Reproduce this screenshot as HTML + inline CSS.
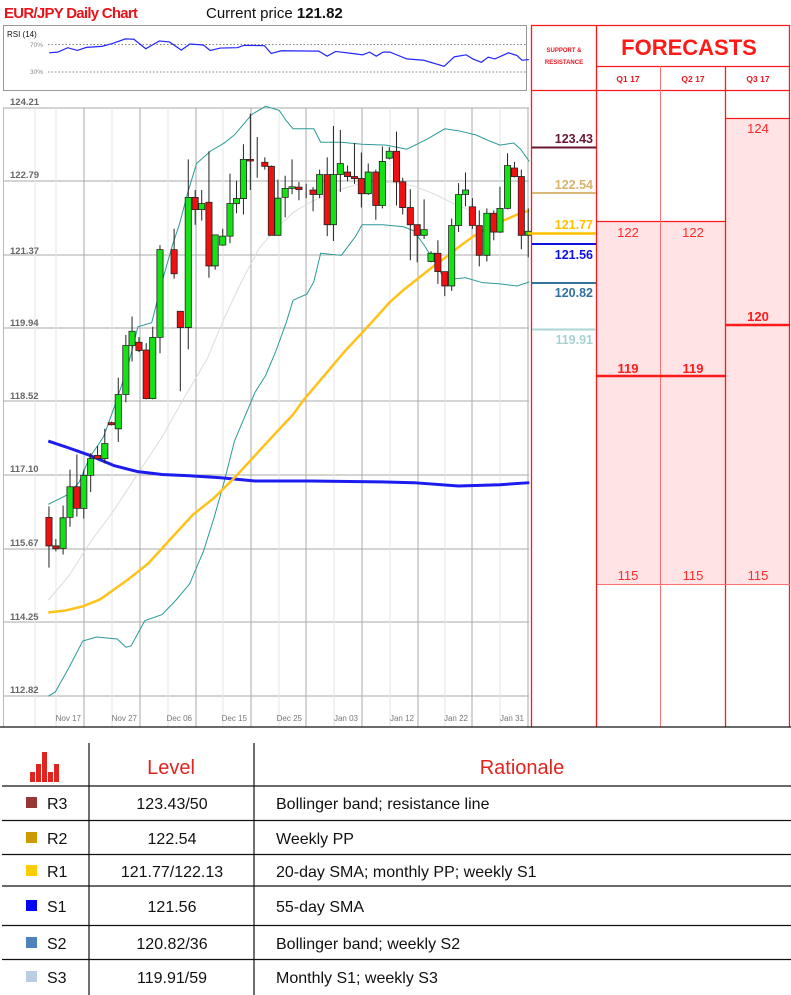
<!DOCTYPE html>
<html><head><meta charset="utf-8"><style>
html,body{margin:0;padding:0;background:#fff;width:791px;height:995px;overflow:hidden}
svg{display:block}
text{font-family:"Liberation Sans",sans-serif}
</style></head><body>
<svg width="791" height="995" viewBox="0 0 791 995" xmlns="http://www.w3.org/2000/svg">
<!-- Title -->
<text x="4" y="18" font-size="15" font-weight="bold" fill="#e8141c" textLength="134">EUR/JPY Daily Chart</text>
<text x="206" y="18" font-size="15" fill="#111">Current price <tspan font-weight="bold">121.82</tspan></text>

<!-- RSI box -->
<rect x="3.5" y="25.5" width="523" height="65" fill="#fff" stroke="#999"/>
<text x="7" y="37" font-size="8" fill="#111">RSI (14)</text>
<text x="30" y="47" font-size="6.5" fill="#888">70%</text>
<text x="30" y="74" font-size="6.5" fill="#888">30%</text>
<line x1="48" y1="44.5" x2="526" y2="44.5" stroke="#555" stroke-dasharray="1.5,2" stroke-width="0.8"/>
<line x1="48" y1="72" x2="526" y2="72" stroke="#555" stroke-dasharray="1.5,2" stroke-width="0.8"/>
<g transform="translate(0,25) scale(0.339,0.339)">
<polyline fill="none" stroke="#2424ff" stroke-width="1.2" vector-effect="non-scaling-stroke" points="145,82 170,80 200,67 228,75 255,66 300,63 330,55 370,41 395,42 430,70 470,47 500,50 535,74 560,56 600,59 620,75 650,68 700,67 720,60 780,61 800,84 830,76 940,77 965,92 990,78 1040,84 1070,88 1090,80 1110,92 1130,80 1150,80 1200,100 1250,104 1310,122 1340,94 1375,88 1395,100 1420,110 1440,95 1460,100 1500,82 1525,90 1540,104 1560,102"/>
</g>

<!-- Main chart -->
<rect x="3" y="108" width="526" height="619" fill="#fff"/>
<line x1="3.5" y1="108" x2="3.5" y2="727" stroke="#bbb"/>
<g stroke="#aaa" stroke-width="1">
<line x1="3" y1="108" x2="529" y2="108"/><line x1="3" y1="181" x2="529" y2="181"/><line x1="3" y1="255" x2="529" y2="255"/>
<line x1="3" y1="328" x2="529" y2="328"/><line x1="3" y1="401" x2="529" y2="401"/><line x1="3" y1="475" x2="529" y2="475"/>
<line x1="3" y1="549" x2="529" y2="549"/><line x1="3" y1="622" x2="529" y2="622"/><line x1="3" y1="696" x2="529" y2="696"/>
</g>
<g stroke="#aaa" stroke-width="1">
<line x1="84" y1="108" x2="84" y2="727"/><line x1="140" y1="108" x2="140" y2="727"/><line x1="196" y1="108" x2="196" y2="727"/>
<line x1="251" y1="108" x2="251" y2="727"/><line x1="306" y1="108" x2="306" y2="727"/><line x1="362" y1="108" x2="362" y2="727"/>
<line x1="418" y1="108" x2="418" y2="727"/><line x1="472" y1="108" x2="472" y2="727"/><line x1="528" y1="108" x2="528" y2="727"/>
</g>
<g stroke="#e6e6e6" stroke-width="1">
<line x1="35" y1="108" x2="35" y2="727"/><line x1="56" y1="108" x2="56" y2="727"/><line x1="112" y1="108" x2="112" y2="727"/><line x1="168" y1="108" x2="168" y2="727"/><line x1="223" y1="108" x2="223" y2="727"/><line x1="279" y1="108" x2="279" y2="727"/><line x1="334" y1="108" x2="334" y2="727"/><line x1="390" y1="108" x2="390" y2="727"/><line x1="445" y1="108" x2="445" y2="727"/><line x1="500" y1="108" x2="500" y2="727"/>
</g>
<g font-size="9.5" fill="#666" font-weight="bold">
<text x="10" y="105">124.21</text><text x="10" y="178">122.79</text><text x="10" y="254">121.37</text>
<text x="10" y="326">119.94</text><text x="10" y="399">118.52</text><text x="10" y="472">117.10</text>
<text x="10" y="546">115.67</text><text x="10" y="620">114.25</text><text x="10" y="693">112.82</text>
</g>
<g font-size="8" fill="#777" text-anchor="end">
<text x="81" y="721">Nov 17</text><text x="137" y="721">Nov 27</text><text x="192" y="721">Dec 06</text>
<text x="247" y="721">Dec 15</text><text x="302" y="721">Dec 25</text><text x="358" y="721">Jan 03</text>
<text x="414" y="721">Jan 12</text><text x="468" y="721">Jan 22</text><text x="524" y="721">Jan 31</text>
</g>

<g transform="translate(0,90) scale(0.3448,0.4082)">
<!-- middle band -->
<polyline fill="none" stroke="#dcdcdc" stroke-width="1" vector-effect="non-scaling-stroke" points="140,1250 200,1190 260,1110 330,1030 400,940 470,850 530,760 600,660 650,560 700,470 750,390 800,340 850,300 900,275 950,255 1000,240 1050,228 1100,225 1150,228 1200,235 1260,255 1320,280 1380,300"/>
<!-- bollinger -->
<polyline fill="none" stroke="#2a9a98" stroke-width="1" vector-effect="non-scaling-stroke" points="140,1015 200,990 230,960 260,900 300,850 330,780 370,680 400,580 440,570 470,470 500,380 520,330 545,250 570,180 610,150 650,130 680,110 710,80 730,60 770,40 810,50 830,75 850,95 910,95 930,128 990,128 1050,133 1120,135 1180,145 1240,120 1290,95 1330,100 1380,110 1420,125 1450,135 1490,130 1510,145 1535,175"/>
<polyline fill="none" stroke="#2a9a98" stroke-width="1" vector-effect="non-scaling-stroke" points="140,1485 160,1475 200,1415 240,1350 280,1340 340,1345 365,1365 380,1362 420,1300 470,1285 510,1250 550,1210 590,1130 620,1050 650,960 680,860 710,800 740,740 770,700 800,640 830,570 850,515 890,500 910,470 930,400 990,405 1030,360 1050,330 1110,330 1170,335 1200,345 1230,380 1260,420 1290,465 1350,460 1400,472 1450,475 1500,480 1535,470"/>
<!-- 55 SMA blue -->
<polyline fill="none" stroke="#1c1cf0" stroke-width="3" vector-effect="non-scaling-stroke" stroke-linejoin="round" points="140,860 200,877 260,895 330,920 400,935 470,942 550,945 640,950 740,958 900,958 1100,960 1200,962 1330,970 1450,967 1535,962"/>
<!-- yellow 20SMA -->
<polyline fill="none" stroke="#ffc21a" stroke-width="2.5" vector-effect="non-scaling-stroke" stroke-linejoin="round" points="140,1280 190,1275 240,1265 290,1248 320,1230 370,1200 430,1160 500,1095 560,1040 620,1000 680,950 740,895 800,840 850,795 880,760 920,720 960,680 1000,640 1050,595 1090,558 1130,520 1170,490 1200,470 1260,430 1300,405 1330,385 1370,360 1400,345 1460,320 1500,305 1535,295"/>
<!-- wicks -->
<path stroke="#222" stroke-width="1" vector-effect="non-scaling-stroke" fill="none" d="M142 1020V1170M162 1100V1130M183 1018V1138M203 930V1070M223 893V1045M243 930V1050M263 890V985M283 872V905M304 830V915M323 812V822M343 705V862M365 600V765M383 555V665M403 605V642M424 620V758M443 580V758M464 380V645M505 340V462M523 542V738M546 170V635M566 245V330M585 245V320M606 150V460M624 355V440M646 340V382M667 205V375M686 222V302M706 133V305M726 58V245M746 115V215M768 165V195M787 185V356M806 220V356M827 210V312M847 170V255M867 225V270M888 230V265M908 238V297M927 195V265M949 165V358M967 88V370M987 98V250M1008 185V224M1028 130V230M1048 153V288M1068 180V257M1090 195V318M1109 138V290M1129 140V170M1150 102V283M1168 215V305M1190 243V417M1210 330V422M1230 268V365M1250 395V422M1270 368V475M1290 445V505M1310 315V492M1330 228V348M1350 202V285M1370 265V340M1390 295V432M1412 290V420M1432 295V368M1450 237V350M1472 155V292M1492 176V214M1512 195V390M1532 290V410"/>
<!-- red candles -->
<g fill="#ee1111" stroke="#222" stroke-width="0.8" vector-effect="non-scaling-stroke">
<rect x="133" y="1047" width="18" height="70" vector-effect="non-scaling-stroke"/>
<rect x="153" y="1117" width="18" height="7" vector-effect="non-scaling-stroke"/>
<rect x="214" y="972" width="18" height="53" vector-effect="non-scaling-stroke"/>
<rect x="274" y="895" width="18" height="8" vector-effect="non-scaling-stroke"/>
<rect x="314" y="815" width="18" height="5" vector-effect="non-scaling-stroke"/>
<rect x="394" y="618" width="18" height="20" vector-effect="non-scaling-stroke"/>
<rect x="415" y="637" width="18" height="119" vector-effect="non-scaling-stroke"/>
<rect x="496" y="391" width="18" height="59" vector-effect="non-scaling-stroke"/>
<rect x="514" y="542" width="18" height="40" vector-effect="non-scaling-stroke"/>
<rect x="557" y="263" width="18" height="30" vector-effect="non-scaling-stroke"/>
<rect x="597" y="275" width="18" height="156" vector-effect="non-scaling-stroke"/>
<rect x="717" y="170" width="18" height="4" vector-effect="non-scaling-stroke"/>
<rect x="759" y="177" width="18" height="10" vector-effect="non-scaling-stroke"/>
<rect x="778" y="187" width="18" height="169" vector-effect="non-scaling-stroke"/>
<rect x="858" y="238" width="18" height="6" vector-effect="non-scaling-stroke"/>
<rect x="899" y="245" width="18" height="11" vector-effect="non-scaling-stroke"/>
<rect x="940" y="207" width="18" height="123" vector-effect="non-scaling-stroke"/>
<rect x="999" y="201" width="18" height="11" vector-effect="non-scaling-stroke"/>
<rect x="1019" y="212" width="18" height="5" vector-effect="non-scaling-stroke"/>
<rect x="1039" y="217" width="18" height="37" vector-effect="non-scaling-stroke"/>
<rect x="1081" y="201" width="18" height="82" vector-effect="non-scaling-stroke"/>
<rect x="1141" y="150" width="18" height="75" vector-effect="non-scaling-stroke"/>
<rect x="1159" y="225" width="18" height="63" vector-effect="non-scaling-stroke"/>
<rect x="1181" y="288" width="18" height="42" vector-effect="non-scaling-stroke"/>
<rect x="1201" y="330" width="18" height="26" vector-effect="non-scaling-stroke"/>
<rect x="1261" y="400" width="18" height="45" vector-effect="non-scaling-stroke"/>
<rect x="1281" y="445" width="18" height="35" vector-effect="non-scaling-stroke"/>
<rect x="1361" y="286" width="18" height="46" vector-effect="non-scaling-stroke"/>
<rect x="1381" y="332" width="18" height="73" vector-effect="non-scaling-stroke"/>
<rect x="1423" y="302" width="18" height="46" vector-effect="non-scaling-stroke"/>
<rect x="1483" y="191" width="18" height="21" vector-effect="non-scaling-stroke"/>
<rect x="1503" y="212" width="18" height="144" vector-effect="non-scaling-stroke"/>
</g>
<g fill="#16e016" stroke="#222" stroke-width="0.8">
<rect x="174" y="1048" width="18" height="75" vector-effect="non-scaling-stroke"/>
<rect x="194" y="972" width="18" height="75" vector-effect="non-scaling-stroke"/>
<rect x="234" y="944" width="18" height="81" vector-effect="non-scaling-stroke"/>
<rect x="254" y="903" width="18" height="41" vector-effect="non-scaling-stroke"/>
<rect x="295" y="866" width="18" height="37" vector-effect="non-scaling-stroke"/>
<rect x="334" y="746" width="18" height="84" vector-effect="non-scaling-stroke"/>
<rect x="356" y="626" width="18" height="120" vector-effect="non-scaling-stroke"/>
<rect x="374" y="591" width="18" height="35" vector-effect="non-scaling-stroke"/>
<rect x="434" y="606" width="18" height="150" vector-effect="non-scaling-stroke"/>
<rect x="455" y="391" width="18" height="215" vector-effect="non-scaling-stroke"/>
<rect x="537" y="263" width="18" height="319" vector-effect="non-scaling-stroke"/>
<rect x="576" y="278" width="18" height="15" vector-effect="non-scaling-stroke"/>
<rect x="615" y="355" width="18" height="76" vector-effect="non-scaling-stroke"/>
<rect x="637" y="358" width="18" height="22" vector-effect="non-scaling-stroke"/>
<rect x="658" y="278" width="18" height="80" vector-effect="non-scaling-stroke"/>
<rect x="677" y="266" width="18" height="12" vector-effect="non-scaling-stroke"/>
<rect x="697" y="170" width="18" height="96" vector-effect="non-scaling-stroke"/>
<rect x="797" y="265" width="18" height="91" vector-effect="non-scaling-stroke"/>
<rect x="818" y="241" width="18" height="22" vector-effect="non-scaling-stroke"/>
<rect x="838" y="237" width="18" height="4" vector-effect="non-scaling-stroke"/>
<rect x="918" y="207" width="18" height="49" vector-effect="non-scaling-stroke"/>
<rect x="958" y="207" width="18" height="123" vector-effect="non-scaling-stroke"/>
<rect x="978" y="180" width="18" height="27" vector-effect="non-scaling-stroke"/>
<rect x="1059" y="201" width="18" height="53" vector-effect="non-scaling-stroke"/>
<rect x="1100" y="175" width="18" height="108" vector-effect="non-scaling-stroke"/>
<rect x="1120" y="150" width="18" height="17" vector-effect="non-scaling-stroke"/>
<rect x="1221" y="342" width="18" height="14" vector-effect="non-scaling-stroke"/>
<rect x="1241" y="400" width="18" height="20" vector-effect="non-scaling-stroke"/>
<rect x="1301" y="332" width="18" height="148" vector-effect="non-scaling-stroke"/>
<rect x="1321" y="256" width="18" height="76" vector-effect="non-scaling-stroke"/>
<rect x="1341" y="245" width="18" height="11" vector-effect="non-scaling-stroke"/>
<rect x="1403" y="302" width="18" height="103" vector-effect="non-scaling-stroke"/>
<rect x="1441" y="290" width="18" height="58" vector-effect="non-scaling-stroke"/>
<rect x="1463" y="185" width="18" height="105" vector-effect="non-scaling-stroke"/>
<rect x="1523" y="346" width="18" height="10" vector-effect="non-scaling-stroke"/>
</g>
</g>
<line x1="0" y1="727" x2="531" y2="727" stroke="#111" stroke-width="1.2"/>

<!-- Right panel -->
<rect x="597" y="221" width="128" height="364" fill="#ffe3e5"/>
<rect x="725" y="118" width="64" height="467" fill="#ffe3e5"/>
<g stroke="#ff1a1a" stroke-width="1.3" fill="none">
<line x1="531.5" y1="25" x2="531.5" y2="727"/>
<line x1="596.5" y1="25" x2="596.5" y2="727"/>
<line x1="725.5" y1="66" x2="725.5" y2="727"/>
<line x1="789.5" y1="25" x2="789.5" y2="727"/>
<line x1="531" y1="25.5" x2="790" y2="25.5"/>
<line x1="597" y1="66.5" x2="790" y2="66.5"/>
<line x1="531" y1="90.5" x2="790" y2="90.5"/>
<line x1="597" y1="221.5" x2="725" y2="221.5"/>
<line x1="725" y1="118.5" x2="790" y2="118.5"/>
</g>
<line x1="660.5" y1="66" x2="660.5" y2="727" stroke="#ff7070" stroke-width="1"/>
<line x1="597" y1="584.5" x2="790" y2="584.5" stroke="#ff7070" stroke-width="1"/>
<line x1="597" y1="376" x2="725" y2="376" stroke="#ff1a1a" stroke-width="2.5"/>
<line x1="725" y1="325" x2="790" y2="325" stroke="#ff1a1a" stroke-width="2.5"/>
<line x1="531" y1="727" x2="791" y2="727" stroke="#111" stroke-width="1.2"/>

<text x="564" y="52" font-size="6" fill="#e8141c" font-weight="bold" text-anchor="middle">SUPPORT &amp;</text>
<text x="564" y="64" font-size="6" fill="#e8141c" font-weight="bold" text-anchor="middle">RESISTANCE</text>
<text x="689" y="55" font-size="22" fill="#ff1a1a" font-weight="bold" text-anchor="middle">FORECASTS</text>
<g font-size="8.5" fill="#e8141c" text-anchor="middle" font-weight="bold">
<text x="628" y="82">Q1 17</text><text x="693" y="82">Q2 17</text><text x="758" y="82">Q3 17</text>
</g>
<g font-size="13" fill="#ff2a2a" text-anchor="middle">
<text x="628" y="237">122</text><text x="693" y="237">122</text><text x="758" y="133">124</text>
<text x="628" y="580">115</text><text x="693" y="580">115</text><text x="758" y="580">115</text>
</g>
<g font-size="13" fill="#ff1a1a" text-anchor="middle" font-weight="bold">
<text x="628" y="373">119</text><text x="693" y="373">119</text><text x="758" y="321">120</text>
</g>

<!-- support lines -->
<line x1="532" y1="147.5" x2="596" y2="147.5" stroke="#6b1535" stroke-width="2"/>
<line x1="532" y1="193" x2="596" y2="193" stroke="#dbb878" stroke-width="2"/>
<line x1="528" y1="233.5" x2="596" y2="233.5" stroke="#ffc000" stroke-width="2.5"/>
<line x1="532" y1="244" x2="596" y2="244" stroke="#1010e0" stroke-width="2"/>
<line x1="532" y1="283" x2="596" y2="283" stroke="#31729e" stroke-width="2"/>
<line x1="532" y1="329.5" x2="596" y2="329.5" stroke="#aad6d6" stroke-width="2"/>
<g font-size="12.5" font-weight="bold" text-anchor="end">
<text x="593" y="143" fill="#6b1535">123.43</text>
<text x="593" y="189" fill="#d8b36e">122.54</text>
<text x="593" y="229" fill="#ffc000">121.77</text>
<text x="593" y="259" fill="#1010e0">121.56</text>
<text x="593" y="297" fill="#31729e">120.82</text>
<text x="593" y="344" fill="#a8d2d2">119.91</text>
</g>

<!-- Bottom table -->
<g fill="#e02420">
<rect x="30" y="772" width="5" height="10"/><rect x="36" y="764" width="5" height="18"/><rect x="42" y="752" width="5" height="30"/><rect x="48" y="772" width="5" height="10"/><rect x="54" y="764" width="5" height="18"/>
</g>
<g stroke="#111" stroke-width="1.2">
<line x1="89" y1="743" x2="89" y2="995"/><line x1="254" y1="743" x2="254" y2="995"/>
<line x1="2" y1="786" x2="791" y2="786"/><line x1="2" y1="820.5" x2="791" y2="820.5"/>
<line x1="2" y1="854.5" x2="791" y2="854.5"/><line x1="2" y1="886" x2="791" y2="886"/>
<line x1="2" y1="925.5" x2="791" y2="925.5"/><line x1="2" y1="959.5" x2="791" y2="959.5"/>
</g>
<text x="171" y="774" font-size="20" fill="#e02420" text-anchor="middle">Level</text>
<text x="522" y="774" font-size="20" fill="#e02420" text-anchor="middle">Rationale</text>
<rect x="26" y="797" width="11" height="11" fill="#953735"/>
<rect x="26" y="832" width="11" height="11" fill="#cc9900"/>
<rect x="26" y="865" width="11" height="11" fill="#ffcc00"/>
<rect x="26" y="900" width="11" height="11" fill="#0000ff"/>
<rect x="26" y="937" width="11" height="11" fill="#4f81bd"/>
<rect x="26" y="971" width="11" height="11" fill="#b9cde5"/>
<g font-size="16" fill="#111">
<text x="47" y="809">R3</text><text x="47" y="844">R2</text><text x="47" y="877">R1</text>
<text x="47" y="912">S1</text><text x="47" y="949">S2</text><text x="47" y="983">S3</text>
</g>
<g font-size="16" fill="#111" text-anchor="middle">
<text x="172" y="809">123.43/50</text><text x="172" y="844">122.54</text><text x="172" y="877">121.77/122.13</text>
<text x="172" y="912">121.56</text><text x="172" y="949">120.82/36</text><text x="172" y="983">119.91/59</text>
</g>
<g font-size="16" fill="#111">
<text x="276" y="809">Bollinger band; resistance line</text><text x="276" y="844">Weekly PP</text>
<text x="276" y="877">20-day SMA; monthly PP; weekly S1</text><text x="276" y="912">55-day SMA</text>
<text x="276" y="949">Bollinger band; weekly S2</text><text x="276" y="983">Monthly S1; weekly S3</text>
</g>
</svg>
</body></html>
